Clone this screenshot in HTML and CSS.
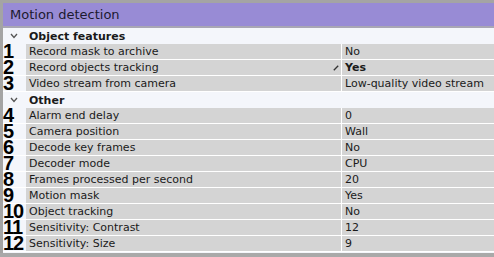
FILE: index.html
```html
<!DOCTYPE html>
<html>
<head>
	<link rel="stylesheet" href="styles.css">
</head>
<body>
	<div class="panel">
		<div class="title">Motion detection</div>
		<div class="group"><svg class="chev" width="8" height="6" viewBox="0 0 8 6"><polyline points="1,1 4,4.5 7,1" fill="none" stroke="#555" stroke-width="1.3"/></svg><span>Object features</span></div>
		<div class="row"><span class="num">1</span><span class="name">Record mask to archive</span><span class="val">No</span></div>
		<div class="row"><span class="num">2</span><span class="name">Record objects tracking<svg class="pen" width="6" height="6" viewBox="0 0 6 6"><line x1="0.8" y1="5.2" x2="5.2" y2="0.8" stroke="#333" stroke-width="1.3"/></svg></span><span class="val bold">Yes</span></div>
		<div class="row"><span class="num">3</span><span class="name">Video stream from camera</span><span class="val">Low-quality video stream</span></div>
		<div class="group"><svg class="chev" width="8" height="6" viewBox="0 0 8 6"><polyline points="1,1 4,4.5 7,1" fill="none" stroke="#555" stroke-width="1.3"/></svg><span>Other</span></div>
		<div class="row"><span class="num">4</span><span class="name">Alarm end delay</span><span class="val">0</span></div>
		<div class="row"><span class="num">5</span><span class="name">Camera position</span><span class="val">Wall</span></div>
		<div class="row"><span class="num">6</span><span class="name">Decode key frames</span><span class="val">No</span></div>
		<div class="row"><span class="num">7</span><span class="name">Decoder mode</span><span class="val">CPU</span></div>
		<div class="row"><span class="num">8</span><span class="name">Frames processed per second</span><span class="val">20</span></div>
		<div class="row"><span class="num">9</span><span class="name">Motion mask</span><span class="val">Yes</span></div>
		<div class="row"><span class="num">10</span><span class="name">Object tracking</span><span class="val">No</span></div>
		<div class="row"><span class="num">11</span><span class="name">Sensitivity: Contrast</span><span class="val">12</span></div>
		<div class="row"><span class="num">12</span><span class="name">Sensitivity: Size</span><span class="val">9</span></div>
	</div>
</body>
</html>
```

FILE: styles.css
```css
body {margin:0;background:#a9a9a9;font-family:"DejaVu Sans",Verdana,sans-serif;font-size:11px;color:#1a1a1a;width:494px;height:257px;overflow:hidden;}
.panel {border-top:3px solid #a4a4a4;border-left:3px solid #a4a4a4;background:#f4f6fb;height:250px;}
.title {background:#988bd5;height:23px;line-height:23px;padding-left:7px;font-size:13px;color:#1c1a30;border-bottom:2px solid #a8a6b4;}
.group {height:16px;display:flex;align-items:center;font-weight:bold;}
.group .chev {margin-left:7px;margin-right:11px;}
.row {display:flex;height:15px;border-bottom:1px solid #fff;}
.num {width:23px;flex:none;font-family:"Liberation Sans",Arial,sans-serif;font-weight:bold;font-size:20px;line-height:15px;color:#000;letter-spacing:-1px;background:#f4f6fb;}
.name {flex:1;background:#d4d4d4;padding-left:3px;line-height:15px;position:relative;display:flex;justify-content:space-between;align-items:center;}
.pen {margin-right:2px;}
.val {width:149px;flex:none;background:#d4d4d4;border-left:1px solid #fff;padding-left:3px;line-height:15px;white-space:nowrap;overflow:hidden;}
.bold {font-weight:bold;}
```
